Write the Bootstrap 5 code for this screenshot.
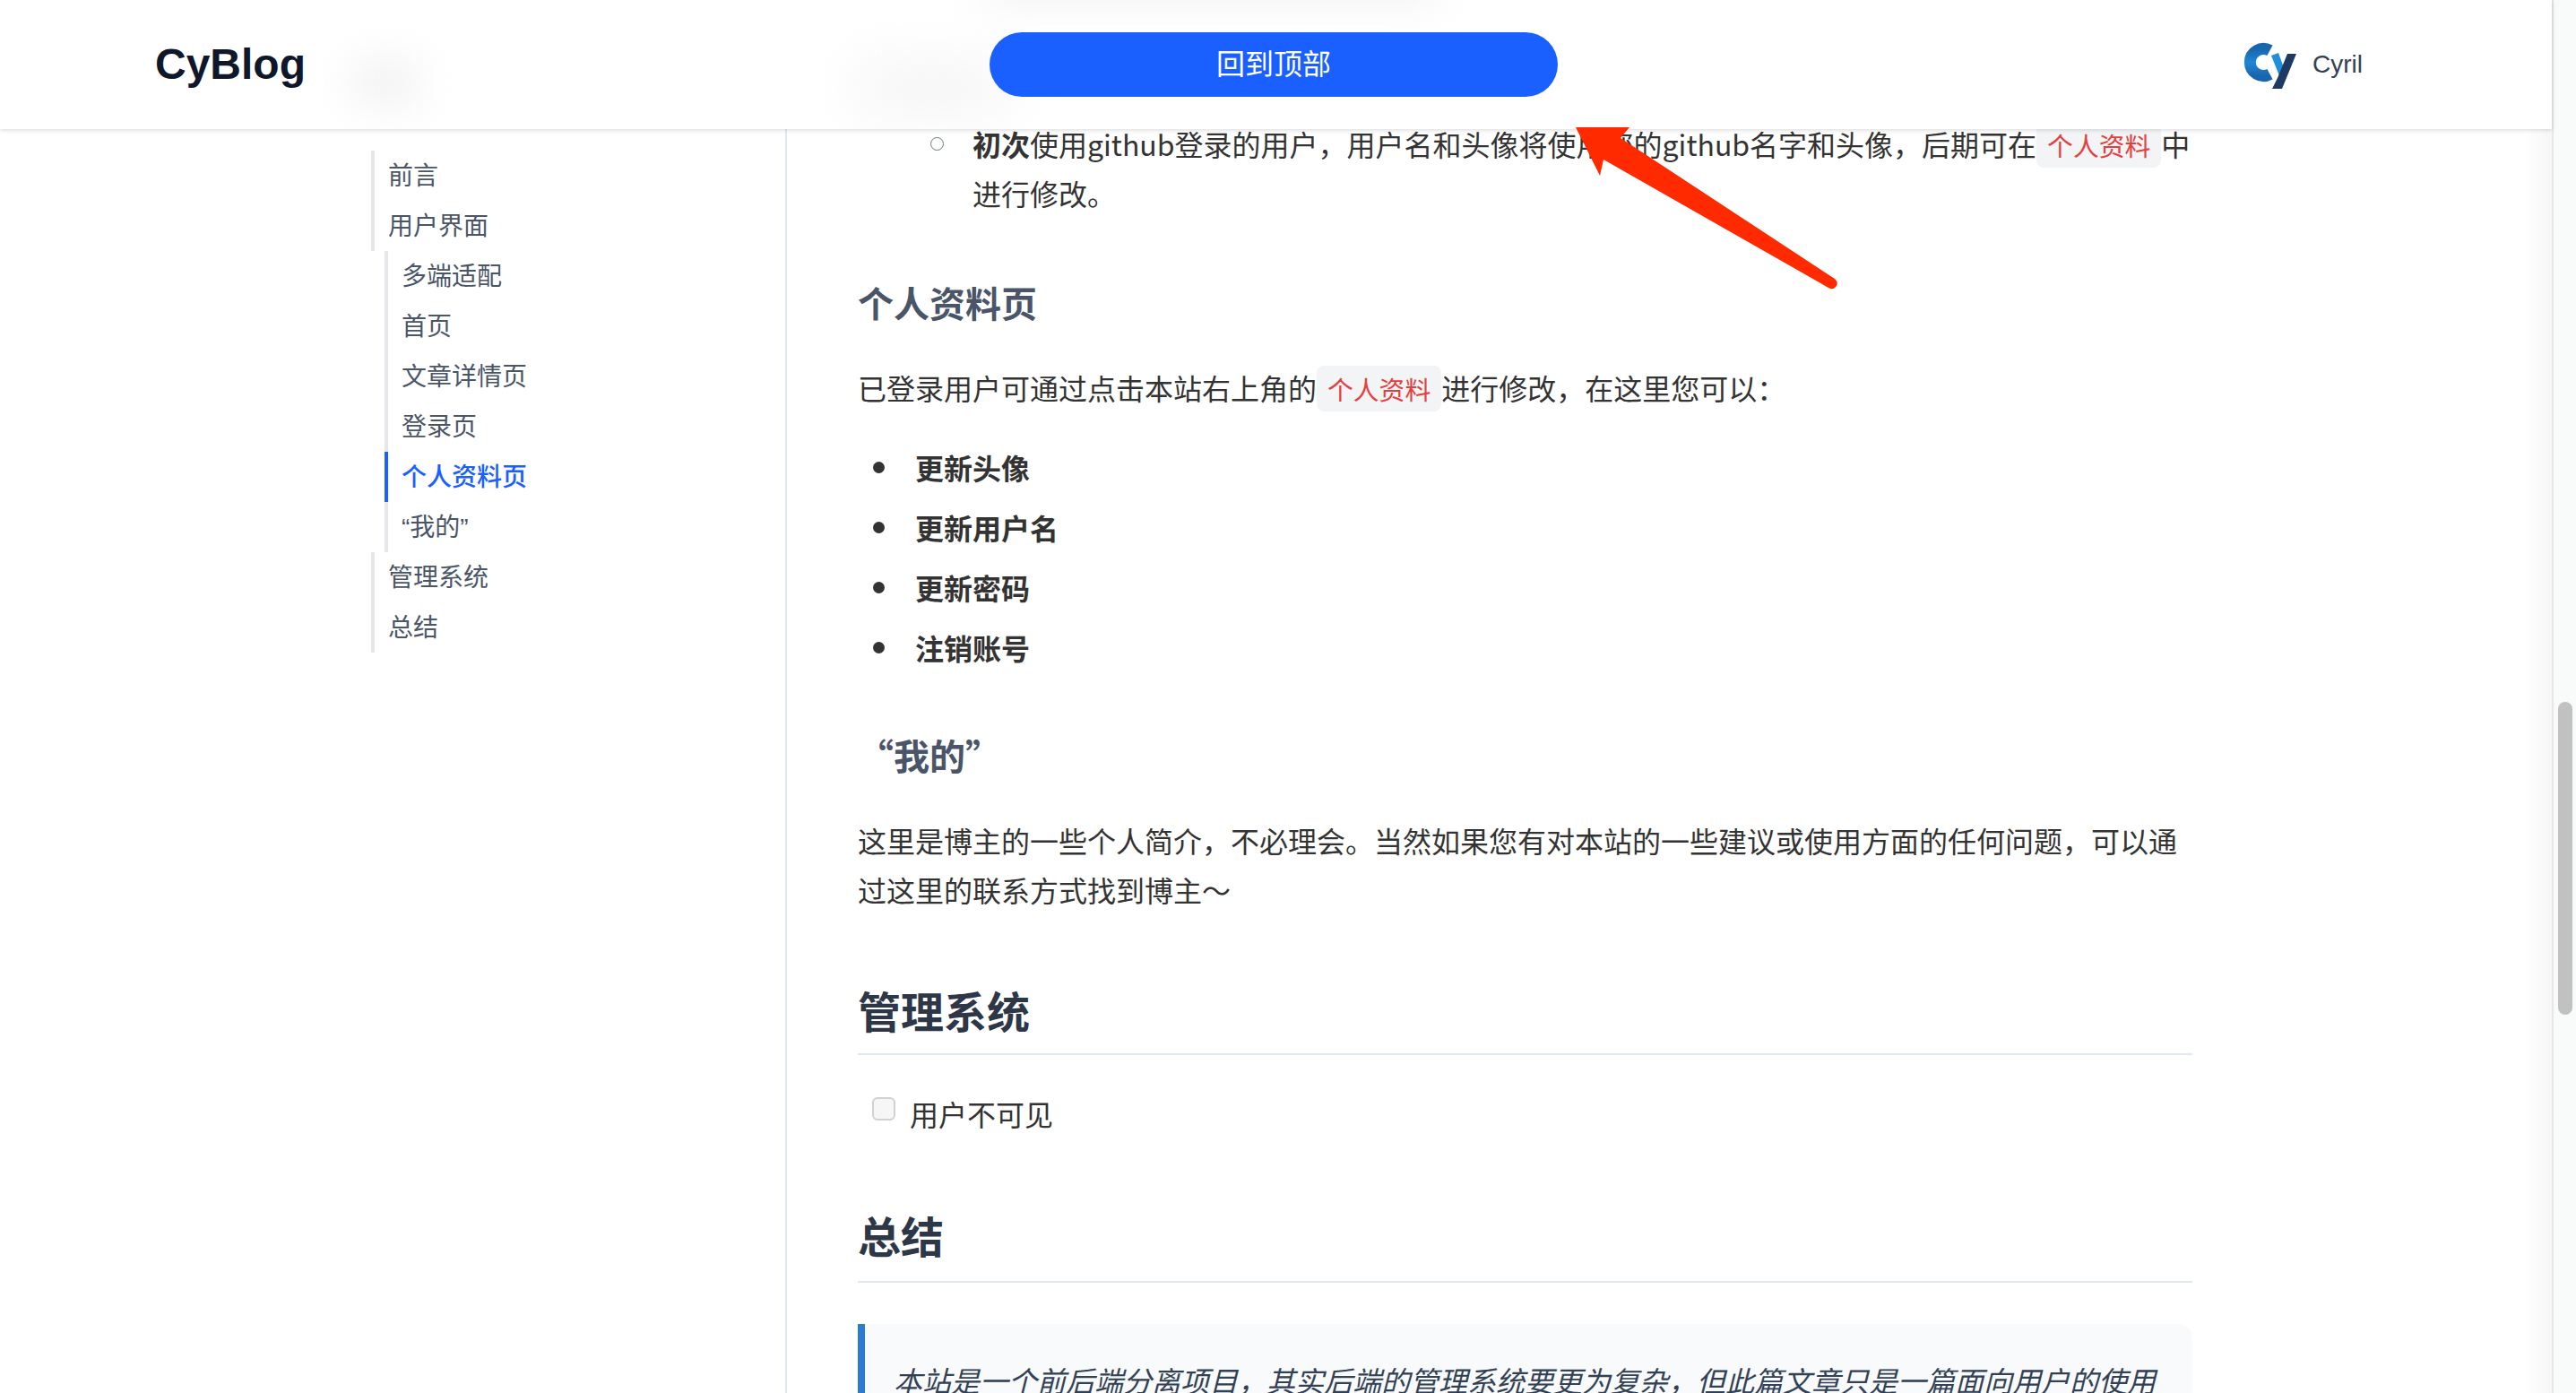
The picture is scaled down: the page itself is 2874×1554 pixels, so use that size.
<!DOCTYPE html>
<html lang="zh-CN">
  <head>
    <meta charset="UTF-8" />
    <title>CyBlog</title>
    <link href="https://cdn.jsdelivr.net/npm/bootstrap@5.3.3/dist/css/bootstrap.min.css" rel="stylesheet" crossorigin="anonymous" />
    <style>
      html, body {
        height: 100%;
        overflow: hidden;
      }
      body {
        font-family: "Noto Sans CJK SC", "Noto Sans", sans-serif;
        color: #333;
        background: #fff;
      }
      .page-wrap {
        height: 1554px;
      }
      .page-main {
        width: 2847px;
        background: linear-gradient(to right, #fff 2815px, #f7f7f7 2845px);
      }
      .top-bar {
        top: 0;
        left: 0;
        width: 2847px;
        height: 144px;
        background: #fff;
        box-shadow: 0 1px 5px rgba(0, 0, 0, .16);
        z-index: 10;
        padding: 0 0 0 173px;
      }
      .blur-blob {
        position: absolute;
        background: #eeeeee;
        filter: blur(24px);
      }
      .blob-a { left: 395px; top: 72px; width: 70px; height: 40px; }
      .blob-b { left: 1100px; top: -30px; width: 500px; height: 30px; }
      .blob-c { left: 960px; top: 72px; width: 160px; height: 50px; background: #f3f3f3; filter: blur(30px); }
      .brand-name {
        font-family: "Liberation Sans", sans-serif;
        font-weight: 700;
        font-size: 48px;
        line-height: 1;
        color: #0f172a;
        position: relative;
      }
      .to-top {
        position: absolute;
        left: 1104px;
        top: 36px;
        width: 634px;
        height: 72px;
        border-radius: 36px;
        border: 0;
        background: #1a5fff;
        color: #fff;
        font-size: 32px;
        line-height: 66px;
        padding: 0 0 6px;
        text-align: center;
      }
      .user-box {
        position: absolute;
        left: 2490px;
        top: 35px;
      }
      .user-name {
        font-family: "Liberation Sans", sans-serif;
        font-size: 28px;
        color: #334155;
        margin-top: -1px;
      }
      .side-col {
        width: 878px;
        height: 100%;
        border-right: 2px solid #e2e8f0;
        padding: 168px 0 0 414px;
        flex: none;
      }
      .toc-group {
        border-left: 4px solid #e5e7eb;
        font-size: 28px;
        line-height: 56px;
        color: #4a5568;
        padding-left: 15px;
      }
      .toc-group div {
        position: relative;
        top: -2px;
      }
      .toc-sub {
        margin-left: 15px;
        padding-left: 0;
        border-left: 0;
      }
      .toc-sub div {
        top: 0;
        height: 56px;
        border-left: 4px solid #e5e7eb;
        padding-left: 15px;
        line-height: 52px;
      }
      .toc-sub .on {
        border-left-color: #1a5fff;
        color: #1a5fff;
        font-weight: 500;
      }
      .latin-quote {
        font-family: "Liberation Sans", sans-serif;
      }
      .art-col {
        width: 1568px;
        padding: 133px 0 0 79px;
        font-size: 32px;
        line-height: 55px;
        flex: none;
      }
      .art-col p, .art-col ul {
        margin: 0;
      }
      .circle-list {
        list-style: none;
        padding-left: 128px;
        position: relative;
      }
      .circle-list::before {
        content: "";
        position: absolute;
        left: 81px;
        top: 20px;
        width: 15px;
        height: 15px;
        border: 1.5px solid #64748b;
        border-radius: 50%;
      }
      .sub-head {
        font-size: 40px;
        font-weight: 700;
        line-height: 56px;
        color: #4a5568;
        margin: 0;
      }
      .main-head {
        font-size: 48px;
        font-weight: 700;
        line-height: 72px;
        color: #2d3748;
        margin: 0;
        padding-bottom: 13px;
        border-bottom: 2px solid #e2e8f0;
      }
      .inline-code {
        font-size: 28.8px;
        line-height: 40px;
        padding: 5px 12px;
        border-radius: 8px;
        background: #f3f4f6;
        color: #e53e3e;
      }
      .dot-list {
        list-style: none;
        padding-left: 64px;
        font-weight: 700;
      }
      .dot-list li {
        position: relative;
        margin-bottom: 12px;
      }
      .dot-list li::before {
        content: "";
        position: absolute;
        left: -47px;
        top: 21px;
        width: 13px;
        height: 13px;
        border-radius: 50%;
        background: #333;
      }
      .task-row {
        padding-left: 16px;
      }
      .task-box {
        width: 26px;
        height: 26px;
        margin: 9px 16px 0 0;
        border: 2px solid #d1d1d1;
        border-radius: 6px;
        background: #f6f6f6;
        flex: none;
      }
      .note-box {
        margin-top: 46px;
        height: 120px;
        padding: 35px 0 0 32px;
        border-left: 8px solid #2b7bd0;
        border-radius: 0 16px 0 0;
        background: #f8fafc;
        color: #334155;
        font-style: italic;
        white-space: nowrap;
      }
      .head-profile { margin-top: 66px; }
      .art-col .para-profile { margin-top: 40px; }
      .art-col .list-profile { margin-top: 33.5px; }
      .head-mine { margin-top: 64.5px; }
      .art-col .para-mine { margin-top: 40px; }
      .head-admin { margin-top: 70px; }
      .task-row { margin-top: 38px; }
      .art-col .head-sum { margin-top: 70.5px; padding-bottom: 16px; }
      .red-arrow {
        position: absolute;
        left: 0;
        top: 0;
        z-index: 20;
      }
      .bar-rail {
        width: 27px;
        flex: none;
        background: #f9fafa;
        border-left: 2px solid #e8e8e8;
        position: relative;
      }
      .bar-thumb {
        position: absolute;
        left: 5px;
        top: 783px;
        width: 16px;
        height: 349px;
        border-radius: 8px;
        background: #c1c1c1;
      }
    </style>
  </head>
  <body>
    <div class="page-wrap d-flex position-relative">
      <div class="page-main d-flex overflow-hidden">
        <!-- 左侧目录 -->
        <aside class="side-col">
          <div class="toc-group">
            <div>前言</div>
            <div>用户界面</div>
          </div>
          <div class="toc-group toc-sub">
            <div>多端适配</div>
            <div>首页</div>
            <div>文章详情页</div>
            <div>登录页</div>
            <div class="on">个人资料页</div>
            <div><span class="latin-quote">“</span>我的<span class="latin-quote">”</span></div>
          </div>
          <div class="toc-group">
            <div>管理系统</div>
            <div>总结</div>
          </div>
        </aside>

        <!-- 正文 -->
        <main class="art-col">
          <ul class="circle-list">
            <li><strong>初次</strong>使用github登录的用户，用户名和头像将使用您的github名字和头像，后期可在<span class="inline-code">个人资料</span>中进行修改。</li>
          </ul>
          <h3 class="sub-head head-profile">个人资料页</h3>
          <p class="para-profile">已登录用户可通过点击本站右上角的<span class="inline-code">个人资料</span>进行修改，在这里您可以：</p>
          <ul class="dot-list list-profile">
            <li>更新头像</li>
            <li>更新用户名</li>
            <li>更新密码</li>
            <li>注销账号</li>
          </ul>
          <h3 class="sub-head head-mine">“我的”</h3>
          <p class="para-mine">这里是博主的一些个人简介，不必理会。当然如果您有对本站的一些建议或使用方面的任何问题，可以通过这里的联系方式找到博主～</p>
          <h2 class="main-head head-admin">管理系统</h2>
          <div class="task-row d-flex align-items-start">
            <div class="task-box"></div>
            <span>用户不可见</span>
          </div>
          <h2 class="main-head head-sum">总结</h2>
          <blockquote class="note-box">本站是一个前后端分离项目，其实后端的管理系统要更为复杂，但此篇文章只是一篇面向用户的使用</blockquote>
        </main>
      </div>

      <div class="bar-rail"><div class="bar-thumb"></div></div>

      <!-- 顶部导航，浮在内容之上 -->
      <header class="top-bar position-absolute d-flex align-items-center overflow-hidden">
        <div class="blur-blob blob-a"></div>
        <div class="blur-blob blob-b"></div>
        <div class="blur-blob blob-c"></div>
        <span class="brand-name">CyBlog</span>
        <button type="button" class="to-top">回到顶部</button>
        <div class="user-box d-flex align-items-center">
          <svg width="90" height="75" viewBox="0 0 90 75">
            <defs>
              <linearGradient id="cGrad" x1="0" y1="0" x2="0" y2="1">
                <stop offset="0" stop-color="#1a66ac" />
                <stop offset=".5" stop-color="#1f86d6" />
                <stop offset="1" stop-color="#1a66ac" />
              </linearGradient>
            </defs>
            <path d="M42.5 21.3A15 15 0 1 0 42.5 47.7" fill="none" stroke="url(#cGrad)" stroke-width="13" />
            <path d="M44 27L52 24L60 46L54 52Z" fill="#1f8fdc" />
            <path d="M62 25H72L56 64H45L51 52Z" fill="#1e3a63" />
          </svg>
          <span class="user-name">Cyril</span>
        </div>
      </header>

      <svg class="red-arrow" width="2874" height="340" viewBox="0 0 2874 340">
        <path d="M1758 142H1818L1808 154L2047 311Q2052 316 2048 320Q2045 324 2040 321L1789 178L1785 196Z" fill="#ff2a00" />
      </svg>
    </div>

    <script src="https://cdn.jsdelivr.net/npm/bootstrap@5.3.3/dist/js/bootstrap.bundle.min.js"></script>
  </body>
</html>
